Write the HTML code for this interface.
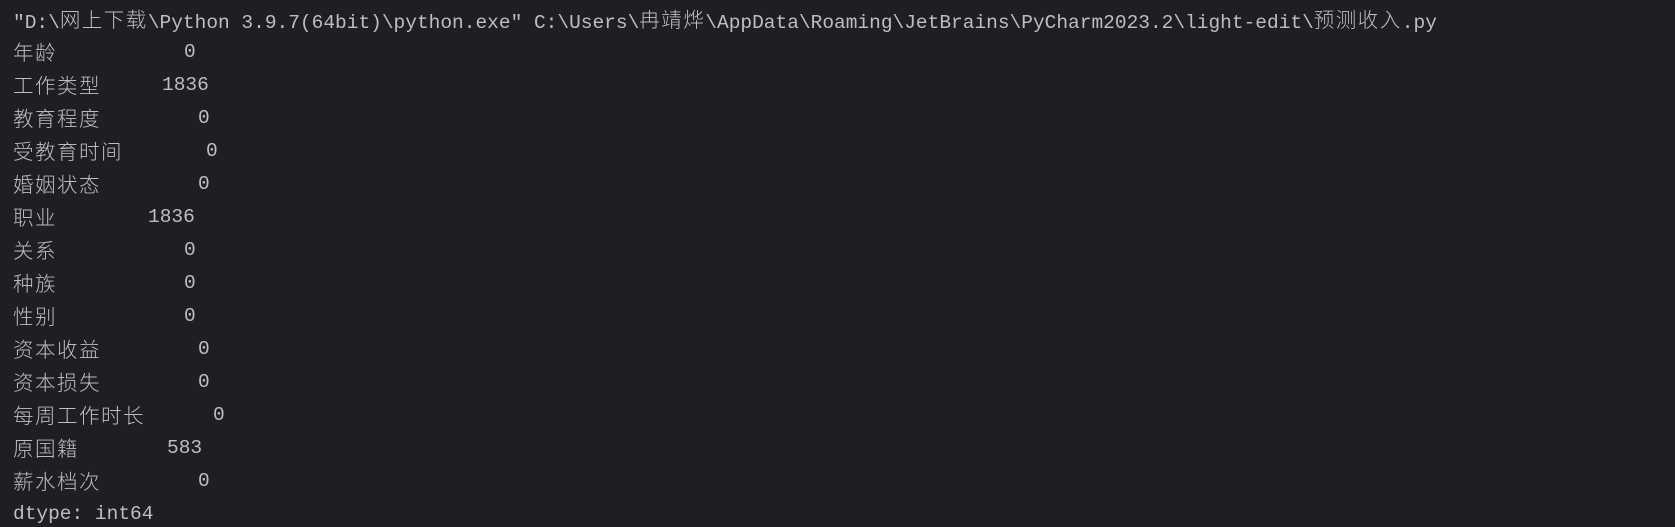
<!DOCTYPE html>
<html><head><meta charset="utf-8"><style>
html,body{margin:0;padding:0;background:#1e1f22;width:1675px;height:527px;overflow:hidden}
.w{position:relative;padding-top:3px}
.l{position:relative;height:33px;line-height:33px;white-space:pre;color:#bcbec4;font-family:"Liberation Mono",monospace;font-size:19.5px;padding-left:13px}
.c{font-family:"Noto Sans CJK SC",sans-serif;font-size:20.5px;letter-spacing:1.5px;font-weight:300;position:relative;top:-1px}
.n{position:absolute;top:0}
</style></head><body><div class="w">
<div class="l">"D:\<span class="c">网上下载</span>\Python 3.9.7(64bit)\python.exe" C:\Users\<span class="c">冉靖烨</span>\AppData\Roaming\JetBrains\PyCharm2023.2\light-edit\<span class="c">预测收入</span>.py</div>
<div class="l"><span class="c">年龄</span><span class="n" style="left:184px">0</span></div>
<div class="l"><span class="c">工作类型</span><span class="n" style="left:162px">1836</span></div>
<div class="l"><span class="c">教育程度</span><span class="n" style="left:198px">0</span></div>
<div class="l"><span class="c">受教育时间</span><span class="n" style="left:206px">0</span></div>
<div class="l"><span class="c">婚姻状态</span><span class="n" style="left:198px">0</span></div>
<div class="l"><span class="c">职业</span><span class="n" style="left:148px">1836</span></div>
<div class="l"><span class="c">关系</span><span class="n" style="left:184px">0</span></div>
<div class="l"><span class="c">种族</span><span class="n" style="left:184px">0</span></div>
<div class="l"><span class="c">性别</span><span class="n" style="left:184px">0</span></div>
<div class="l"><span class="c">资本收益</span><span class="n" style="left:198px">0</span></div>
<div class="l"><span class="c">资本损失</span><span class="n" style="left:198px">0</span></div>
<div class="l"><span class="c">每周工作时长</span><span class="n" style="left:213px">0</span></div>
<div class="l"><span class="c">原国籍</span><span class="n" style="left:167px">583</span></div>
<div class="l"><span class="c">薪水档次</span><span class="n" style="left:198px">0</span></div>
<div class="l">dtype: int64</div>
</div></body></html>
